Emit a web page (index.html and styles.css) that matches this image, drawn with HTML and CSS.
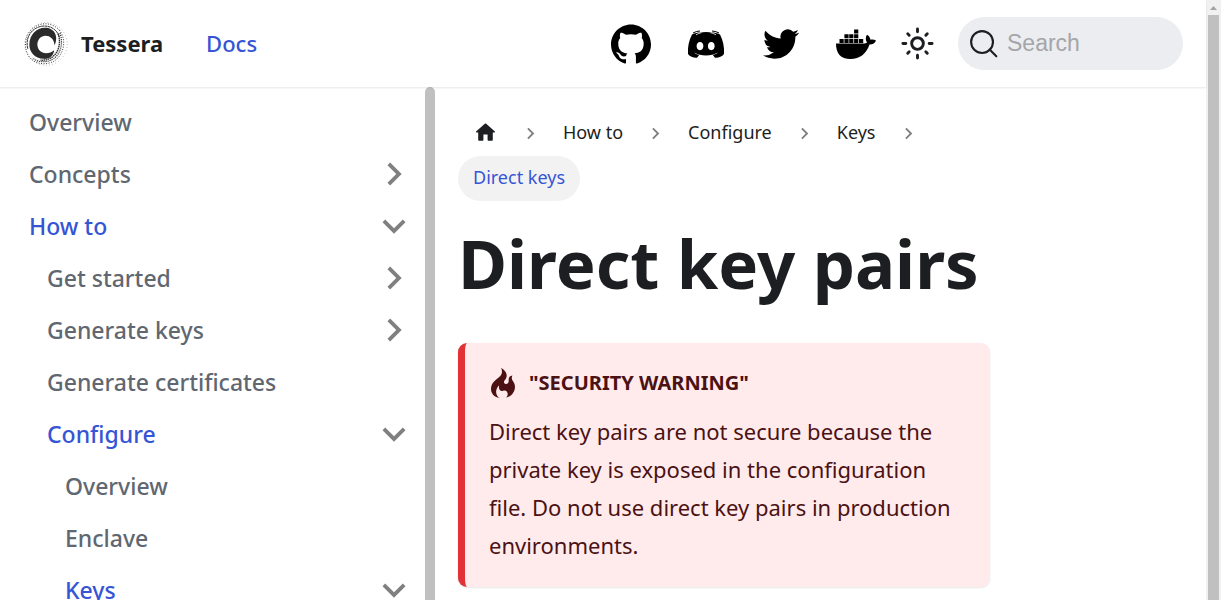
FILE: index.html
```html
<!DOCTYPE html>
<html lang="en">
<head>
<meta charset="utf-8">
<meta name="viewport" content="width=device-width, initial-scale=1">
<title>Direct key pairs | Tessera</title>
<link rel="stylesheet" href="styles.css">
</head>
<body>
<svg class="symbols" aria-hidden="true">
  <symbol id="chevron" viewBox="0 0 24 24"><path d="M7.41 15.41 12 10.83l4.59 4.58L18 14l-6-6-6 6z"/></symbol>
</svg>
<div class="page">
  <header class="navbar">
    <a class="brand" href="#">
      <svg class="brand-logo" viewBox="0 0 48 48" aria-hidden="true">
        <path fill="#2b2b2b" d="M33 25.500C32.500 19 28.500 15.500 23.500 15.500C18.500 15.500 15 19.800 15 24.500C15 29.800 19 33.600 24 33.600C27.500 33.600 30 32.500 32.500 30.500C32 36 27.500 40 21.500 39.500C12.500 39 6.500 32.500 6.600 24.500C6.800 14.500 14 7 23 7C32.500 7 37.500 15.500 33 25.500Z"/>
        <g fill="none" stroke="#2b2b2b">
          <path stroke-width="1" stroke-dasharray="3 .4" d="M5 29C2 17 9 7.500 19 5.500C29 4 36 9.500 38 17"/>
          <path stroke-width="1.400" stroke-dasharray="1.600 .6" d="M36.500 13C40 22 37.500 33 30 38C26 40.500 22 41.300 18 40.800"/>
          <path stroke-width="1.200" stroke-dasharray="1.200 1" d="M38.500 12.500C42 22 40 33 32.500 39C26 43.500 16 44 10 38.500"/>
          <path stroke-width="1" stroke-dasharray="1 1.600" d="M38 9.500C44.500 18 44 31 35.500 39.500C28 46.500 14 46.500 7 38C0 29 1.500 15 10 8C18 1 30 1 38 9.500"/>
          <circle cx="24" cy="24" r="22.200" stroke-width=".7" stroke-dasharray=".8 2.600" opacity=".6"/>
        </g>
      </svg>
      <span>Tessera</span>
    </a>
    <a class="nav-link" href="#">Docs</a>
    <div class="social">
      <a href="#" aria-label="GitHub"><svg viewBox="0 0 24 24"><path d="M12 .297c-6.630 0-12 5.373-12 12 0 5.303 3.438 9.800 8.205 11.385.6.113.82-.258.82-.577 0-.285-.01-1.040-.015-2.040-3.338.724-4.042-1.610-4.042-1.610C4.422 18.070 3.633 17.700 3.633 17.700c-1.087-.744.084-.729.084-.729 1.205.084 1.838 1.236 1.838 1.236 1.070 1.835 2.809 1.305 3.495.998.108-.776.417-1.305.76-1.605-2.665-.3-5.466-1.332-5.466-5.930 0-1.310.465-2.380 1.235-3.220-.135-.303-.54-1.523.105-3.176 0 0 1.005-.322 3.300 1.230.96-.267 1.980-.399 3-.405 1.020.006 2.040.138 3 .405 2.280-1.552 3.285-1.230 3.285-1.230.645 1.653.24 2.873.12 3.176.765.84 1.230 1.910 1.230 3.220 0 4.610-2.805 5.625-5.475 5.920.42.36.81 1.096.81 2.220 0 1.606-.015 2.896-.015 3.286 0 .315.21.69.825.57C20.565 22.092 24 17.592 24 12.297c0-6.627-5.373-12-12-12"/></svg></a>
      <a href="#" aria-label="Discord"><svg viewBox="0 0 40 40"><path fill-rule="evenodd" d="M14 8.500C17.500 7.800 22.500 7.800 26 8.500C28 8.500 31 9 34 10.500C37 16 38.500 23 38 30C36 33 32 34 29 33.700L26.800 31C29 30.500 31 29.500 32 28.500C25 32.500 15 32.500 8 28.500C9 29.500 11 30.500 13.200 31L11 33.700C8 34 4 33 2 30C1.500 23 3 16 6 10.500C9 9 12 8.500 14 8.500ZM14 18C9.500 18 9.500 26.200 14 26.200C18.500 26.200 18.500 18 14 18ZM25.300 18C20.800 18 20.800 26.200 25.300 26.200C29.800 26.200 29.800 18 25.300 18Z"/><path d="M7 9Q10 7.200 14 7M33 9Q30 7.200 26 7" fill="none" stroke="#000" stroke-width="1"/><path d="M10 10.800Q13 9 15.500 8.700M30 10.800Q27 9 24.500 8.700" fill="none" stroke="#fff" stroke-width=".8"/></svg></a>
      <a href="#" aria-label="Twitter"><svg class="twitter" viewBox="0 0 24 24"><path d="M23.953 4.570a10 10 0 01-2.825.775 4.958 4.958 0 002.163-2.723c-.951.555-2.005.959-3.127 1.184a4.920 4.920 0 00-8.384 4.482C7.690 8.095 4.067 6.130 1.640 3.162a4.822 4.822 0 00-.666 2.475c0 1.710.87 3.213 2.188 4.096a4.904 4.904 0 01-2.228-.616v.06a4.923 4.923 0 003.946 4.827 4.996 4.996 0 01-2.212.085 4.936 4.936 0 004.604 3.417 9.867 9.867 0 01-6.102 2.105c-.39 0-.779-.023-1.170-.067a13.995 13.995 0 007.557 2.209c9.053 0 13.998-7.496 13.998-13.985 0-.21 0-.42-.015-.63A9.935 9.935 0 0024 4.590z"/></svg></a>
      <a href="#" aria-label="Docker"><svg viewBox="0 0 40 40"><path d="M18.100 5.500h4.200v4h-4.200zM8.400 10.300h4.200v4H8.400zM13.200 10.300h4.200v4h-4.200zM18.100 10.300h4.200v4h-4.200zM3.500 15h4.200v4H3.500zM8.400 15h4.200v4H8.400zM13.200 15h4.200v4h-4.200zM18.100 15h4.200v4h-4.200zM23 15h4.200v4H23z"/><path d="M0 19.600H27C29 19.600 30.200 19.300 31 18.600C29.500 16.500 29.300 13 31 10.800C33.200 12 34.200 13.600 34.400 15.800C36.500 15.300 38.500 15.600 40 16.600C39 19.200 36.800 20.600 33.500 20.500C30.500 29.500 24 35 14.500 35C4.500 35 0 29.500 0 19.600Z"/></svg></a>
    </div>
    <button class="theme-toggle" type="button" aria-label="Switch between dark and light mode">
      <svg viewBox="0 0 24 24" fill="none" stroke="currentColor" stroke-width="2" stroke-linecap="round"><circle cx="12" cy="12" r="4"/><path d="M2 12h2M20 12h2M12 2v2M12 20v2M5.300 5.300l1 1M17.700 17.700l1 1M5.300 18.700l1-1M17.700 6.300l1-1"/></svg>
    </button>
    <label class="search">
      <svg viewBox="0 0 20 20" fill="none" stroke="currentColor" stroke-width="1.500" stroke-linecap="round" aria-hidden="true"><circle cx="8.600" cy="8.600" r="7.800"/><path d="M14 14l4.800 4.800"/></svg>
      <input type="search" placeholder="Search" aria-label="Search">
    </label>
  </header>
  <div class="body">
    <aside class="sidebar">
      <nav class="menu" aria-label="Docs sidebar">
        <a class="item" href="#">Overview</a>
        <a class="item" href="#">Concepts<svg class="closed"><use href="#chevron"/></svg></a>
        <a class="item active" href="#">How to<svg class="open"><use href="#chevron"/></svg></a>
        <div class="group">
          <a class="item" href="#">Get started<svg class="closed"><use href="#chevron"/></svg></a>
          <a class="item" href="#">Generate keys<svg class="closed"><use href="#chevron"/></svg></a>
          <a class="item" href="#">Generate certificates</a>
          <a class="item active" href="#">Configure<svg class="open"><use href="#chevron"/></svg></a>
          <div class="group">
            <a class="item" href="#">Overview</a>
            <a class="item" href="#">Enclave</a>
            <a class="item active" href="#">Keys<svg class="open"><use href="#chevron"/></svg></a>
          </div>
        </div>
      </nav>
      <div class="sidebar-thumb"></div>
    </aside>
    <main class="content">
      <article class="doc">
        <nav aria-label="Breadcrumbs">
          <ul class="crumbs">
            <li><a href="#" aria-label="Home page"><svg class="home" viewBox="0 0 24 24"><path d="M10 19v-5h4v5c0 .55.45 1 1 1h3c.55 0 1-.45 1-1v-7h1.700c.46 0 .68-.57.33-.87L12.670 3.600c-.38-.34-.96-.34-1.340 0l-8.360 7.530c-.34.3-.13.87.33.87H5v7c0 .55.45 1 1 1h3c.55 0 1-.45 1-1z"/></svg></a><svg class="sep"><use href="#chevron"/></svg></li>
            <li><a href="#">How to</a><svg class="sep"><use href="#chevron"/></svg></li>
            <li><a href="#">Configure</a><svg class="sep"><use href="#chevron"/></svg></li>
            <li><a href="#">Keys</a><svg class="sep"><use href="#chevron"/></svg></li>
            <li><span class="current" aria-current="page">Direct keys</span></li>
          </ul>
        </nav>
        <h1>Direct key pairs</h1>
        <section class="alert">
          <h2><svg viewBox="0 0 12 16" aria-hidden="true"><path d="M5.050.31c.81 2.170.41 3.380-.52 4.310C3.550 5.670 1.980 6.450.9 7.980c-1.450 2.050-1.700 6.530 3.530 7.700-2.200-1.160-2.670-4.520-.3-6.610-.61 2.030.53 3.330 1.940 2.860 1.390-.47 2.300.53 2.270 1.670-.02.78-.31 1.440-1.130 1.810 3.420-.59 4.780-3.420 4.780-5.560 0-2.840-2.530-3.220-1.250-5.610-1.520.13-2.030 1.130-1.890 2.750.09 1.080-1.020 1.800-1.860 1.330-.67-.41-.66-1.190-.06-1.780C8.180 5.310 8.680 2.450 5.050.32z"/></svg>"Security warning"</h2>
          <p>Direct key pairs are not secure because the private key is exposed in the configuration file. Do not use direct key pairs in production environments.</p>
        </section>
      </article>
    </main>
  </div>
</div>
<div class="page-scroll" aria-hidden="true">
  <svg viewBox="0 0 15 15"><path d="M4 10h7L7.500 6z"/></svg>
  <div class="page-thumb"></div>
</div>
</body>
</html>
```
FILE: styles.css
```css
* { box-sizing: border-box; }

body {
  margin: 0;
  height: 100vh;
  display: flex;
  overflow: hidden;
  background: #fff;
  color: #1c1e21;
  font-family: "Noto Sans", sans-serif;
  font-size: 22px;
}

a { color: inherit; text-decoration: none; }
svg { display: block; flex: none; }
.symbols { position: absolute; width: 0; height: 0; }

.page { flex: 1; min-width: 0; display: flex; flex-direction: column; }

/* Top bar */
.navbar {
  position: relative;
  z-index: 1;
  flex: none;
  display: flex;
  align-items: center;
  height: 87px;
  padding: 0 23px;
  background: #fff;
  box-shadow: 0 1px 2px rgba(0, 0, 0, .1);
}
.brand { display: flex; align-items: center; gap: 12px; margin-right: 43px; font-weight: 700; }
.brand-logo { width: 46px; height: 46px; }
.brand span, .nav-link { padding-bottom: 2px; }
.nav-link { color: #3655d5; font-weight: 500; }
.social { display: flex; gap: 35px; margin-left: auto; }
.social svg { width: 40px; height: 40px; }
.social .twitter { padding: 0 2px; }
.theme-toggle {
  margin: 0 23px 0 24px;
  padding: 0;
  border: 0;
  background: none;
  color: #1c1e21;
}
.theme-toggle svg { width: 35px; height: 35px; }
.search {
  display: flex;
  align-items: center;
  gap: 9px;
  width: 225px;
  height: 53px;
  padding: 0 12px;
  border-radius: 27px;
  background: #ebedf0;
}
.search svg { width: 28px; height: 28px; }
.search input {
  flex: 1;
  min-width: 0;
  padding: 0;
  border: 0;
  outline: 0;
  background: none;
  font: 23px "Liberation Sans", sans-serif;
}
.search input::placeholder { color: #a4a6a9; }

.body { flex: 1; min-height: 0; display: flex; }

/* Sidebar */
.sidebar { flex: none; display: flex; width: 435px; overflow: hidden; }
.menu { flex: 1; padding: 9px 8px; }
.item {
  display: flex;
  align-items: center;
  justify-content: space-between;
  height: 52px;
  padding-left: 21px;
  color: #606770;
  font-size: 23px;
  font-weight: 500;
}
.item.active { color: #3655d5; }
.item svg { width: 46px; height: 46px; fill: #808080; }
.open { transform: rotate(180deg); }
.closed { transform: rotate(90deg); }
.group { padding-left: 18px; }
.sidebar-thumb { width: 10px; border-radius: 5px 5px 0 0; background: #c0c0c0; }

/* Document */
.content { flex: 1; min-width: 0; overflow: hidden; }
.doc { width: 75%; padding: 24px 23px; }
.crumbs {
  display: flex;
  flex-wrap: wrap;
  margin: 0;
  padding: 0;
  list-style: none;
  font-size: 18px;
  line-height: 25px;
}
.crumbs li { display: flex; align-items: center; height: 45px; }
.crumbs a, .current { padding: 9px 15px 11px; }
.current { border-radius: 23px; background: #f2f2f2; color: #3655d5; }
.home { width: 25px; height: 25px; fill: #1c1e21; }
.sep { width: 23px; height: 23px; margin: 0 6px; fill: #808080; transform: rotate(90deg); }

h1 { margin: 18px 0 36px; font-size: 67px; line-height: 88px; font-weight: 700; white-space: nowrap; }

.alert {
  padding: 23px 24px;
  border-left: 7px solid #e13238;
  border-radius: 9px;
  background: #ffebec;
  box-shadow: 0 1px 2px rgba(0, 0, 0, .1);
  color: #4b1113;
}
.alert h2 {
  display: flex;
  align-items: center;
  gap: 12px;
  margin: 0 0 12px;
  font-size: 20px;
  line-height: 34px;
  text-transform: uppercase;
}
.alert h2 svg { width: 28px; height: 32px; fill: #4b1113; }
.alert p { margin: 0; line-height: 38px; }

/* Page scrollbar */
.page-scroll { flex: none; display: flex; flex-direction: column; width: 15px; background: #f1f1f1; }
.page-scroll svg { width: 15px; height: 15px; fill: #a3a3a3; }
.page-thumb { flex: 1; margin: 0 2px; background: #c0c0c0; }
```
